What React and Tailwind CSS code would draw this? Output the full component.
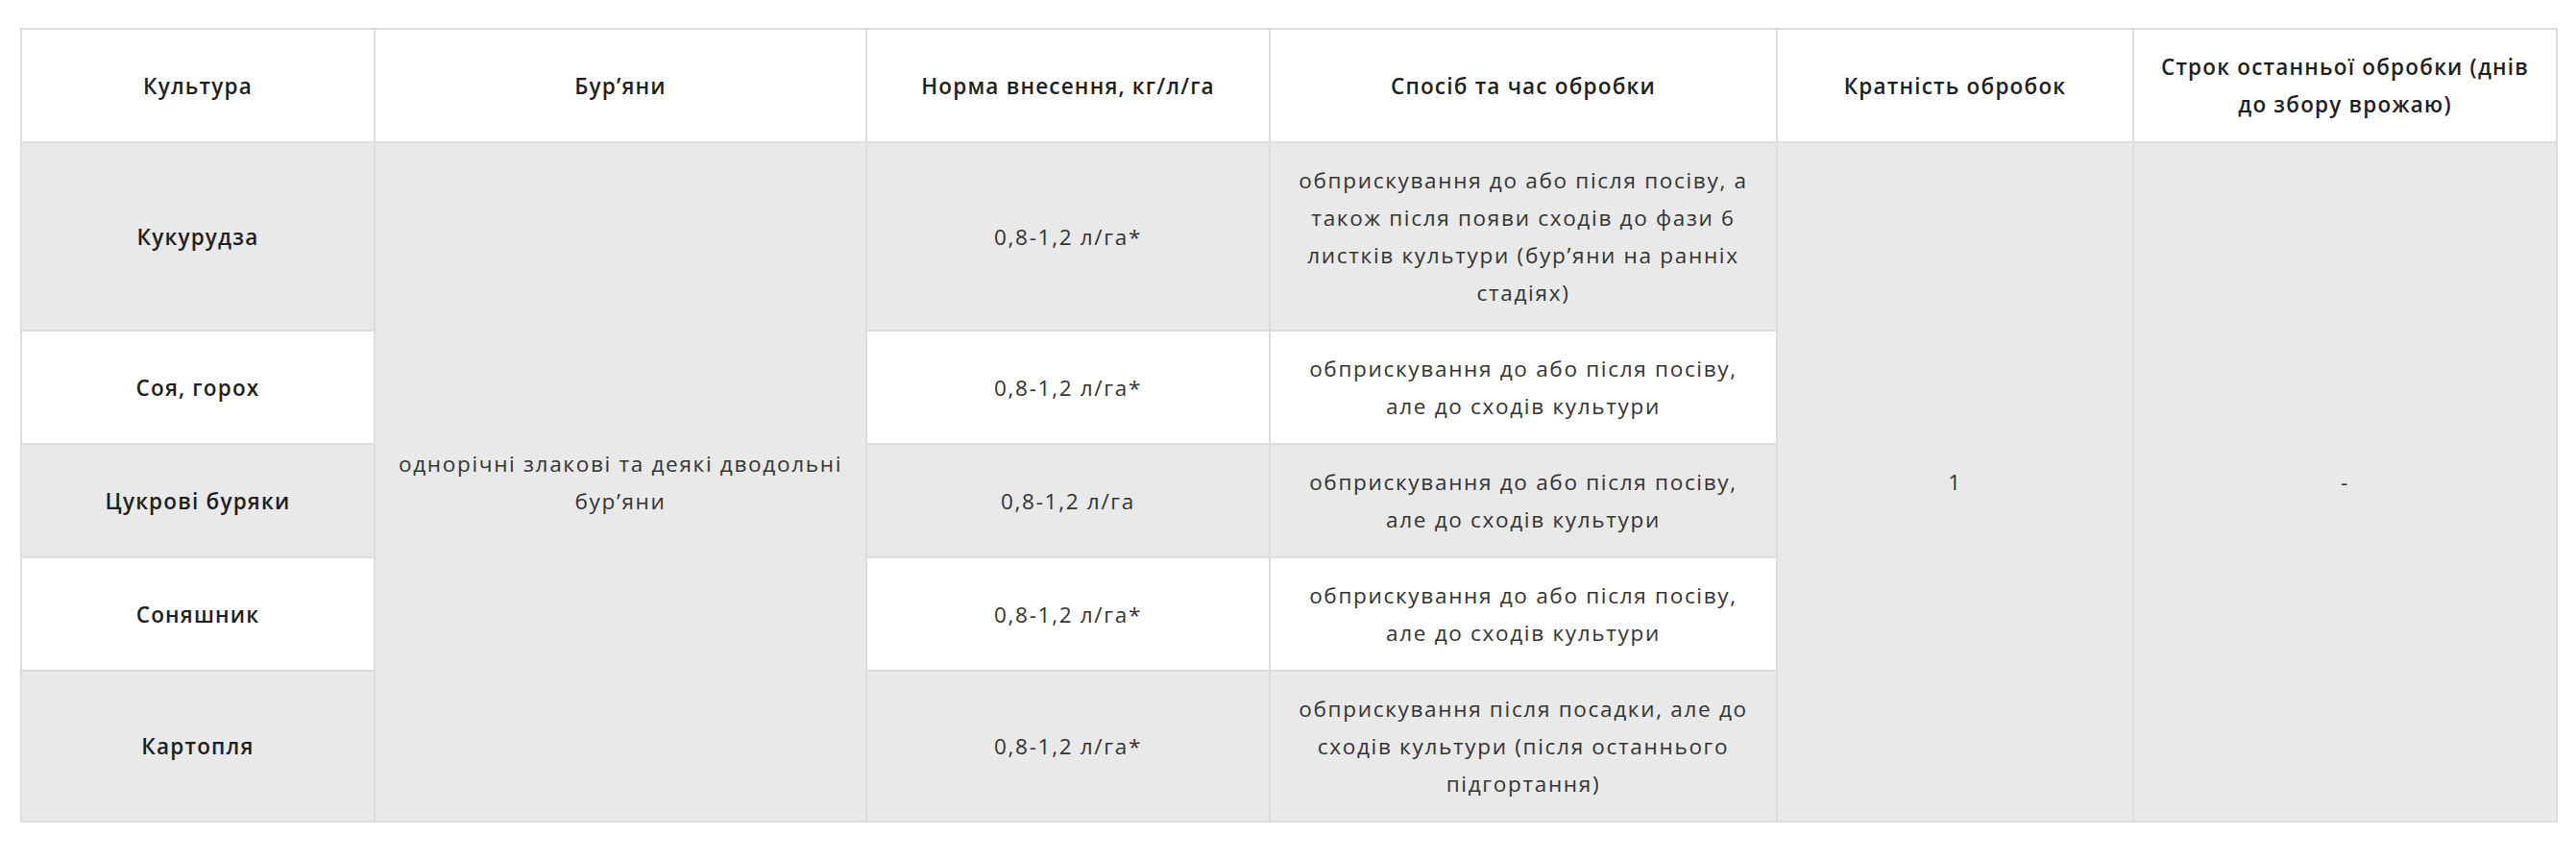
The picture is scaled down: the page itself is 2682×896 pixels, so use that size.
import React from "react";

const th = "border-2 border-[#dddddd] bg-white px-[22px] py-[19px] text-center align-middle font-semibold tracking-[1.2px] text-[#1f1f1f]";
const tdBold = "border-2 border-[#dddddd] px-[22px] py-[19px] text-center align-middle font-semibold tracking-[1.2px] text-[#1f1f1f]";
const td = "border-2 border-[#dddddd] px-[22px] py-[19px] text-center align-middle font-normal tracking-[1.7px] text-[#333333]";

const G = "bg-[#e9e9e9]";
const W = "bg-white";

export default function App() {
  return (
    <div className="min-h-screen bg-white pt-[29px] pl-[21px]" style={{ fontFamily: '"Open Sans", "Noto Sans", sans-serif' }}>
      <table className="w-[2640px] table-fixed border-collapse text-[22.5px] leading-[39px]">
        <colgroup>
          <col className="w-[368px]" />
          <col className="w-[512px]" />
          <col className="w-[420px]" />
          <col className="w-[528px]" />
          <col className="w-[371px]" />
          <col className="w-[441px]" />
        </colgroup>
        <thead>
          <tr>
            <th className={th}>Культура</th>
            <th className={th}>Бур’яни</th>
            <th className={th}>Норма внесення, кг/л/га</th>
            <th className={th}>Спосіб та час обробки</th>
            <th className={th}>Кратність обробок</th>
            <th className={th}>Строк останньої обробки (днів до збору врожаю)</th>
          </tr>
        </thead>
        <tbody>
          <tr>
            <td className={`${tdBold} ${G}`}>Кукурудза</td>
            <td rowSpan={5} className={`${td} ${G}`}>однорічні злакові та деякі дводольні бур’яни</td>
            <td className={`${td} ${G}`}>0,8-1,2 л/га*</td>
            <td className={`${td} ${G}`}>обприскування до або після посіву, а також після появи сходів до фази 6 листків культури (бур’яни на ранніх стадіях)</td>
            <td rowSpan={5} className={`${td} ${G}`}>1</td>
            <td rowSpan={5} className={`${td} ${G}`}>-</td>
          </tr>
          <tr>
            <td className={`${tdBold} ${W}`}>Соя, горох</td>
            <td className={`${td} ${W}`}>0,8-1,2 л/га*</td>
            <td className={`${td} ${W}`}>обприскування до або після посіву, але до сходів культури</td>
          </tr>
          <tr>
            <td className={`${tdBold} ${G}`}>Цукрові буряки</td>
            <td className={`${td} ${G}`}>0,8-1,2 л/га</td>
            <td className={`${td} ${G}`}>обприскування до або після посіву, але до сходів культури</td>
          </tr>
          <tr>
            <td className={`${tdBold} ${W}`}>Соняшник</td>
            <td className={`${td} ${W}`}>0,8-1,2 л/га*</td>
            <td className={`${td} ${W}`}>обприскування до або після посіву, але до сходів культури</td>
          </tr>
          <tr>
            <td className={`${tdBold} ${G}`}>Картопля</td>
            <td className={`${td} ${G}`}>0,8-1,2 л/га*</td>
            <td className={`${td} ${G}`}>обприскування після посадки, але до сходів культури (після останнього підгортання)</td>
          </tr>
        </tbody>
      </table>
    </div>
  );
}
